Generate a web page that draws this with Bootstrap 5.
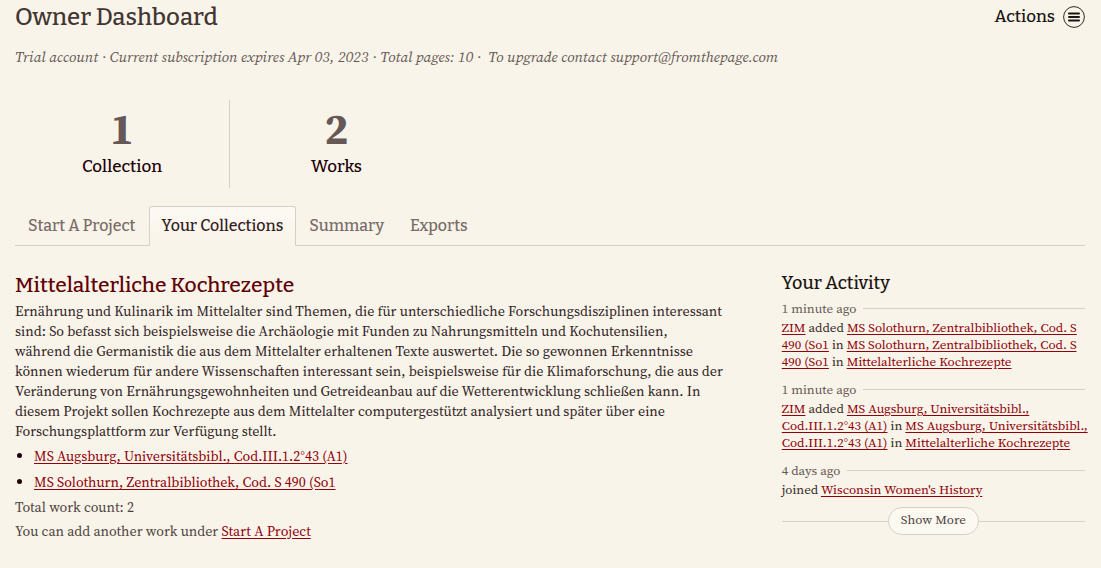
<!DOCTYPE html>
<html lang="en">
<head>
<meta charset="utf-8">
<meta name="viewport" content="width=device-width, initial-scale=1">
<title>Owner Dashboard</title>
<link href="https://cdn.jsdelivr.net/npm/bootstrap@5.3.0/dist/css/bootstrap.min.css" rel="stylesheet">
<style>
  :root { --paper: #f9f4e9; --rule: #d5d1c8; --ink: #362b28; --soft: #665856; --wine: #900009; }
  body { background: var(--paper); color: var(--ink); font: 14px/20px "Source Serif 4", "Noto Serif", "Liberation Serif", serif; }
  a { color: var(--wine); text-underline-offset: 2px; }
  a:hover { color: #5a0006; }
  .page { padding: 1px 16px 24px 15px; }
  .slab, h1, h2, h3 { font-family: Bitter, "DejaVu Serif Condensed", "Noto Serif", serif; font-weight: 500; margin: 0; }
  h1 { font-size: 24px; line-height: 32px; color: #433532; }
  .actions { font-size: 17px; line-height: 32px; color: #1c1413; padding: 0; border: 0; background: none; }
  .trial { font-size: 15px; color: var(--soft); margin: 14px 0 0; }
  .stats { margin-top: 33px; }
  .stat { width: 214px; height: 88px; padding-top: 9px; text-align: center; }
  .stat + .stat { border-left: 1px solid var(--rule); }
  .figure-num { font-size: 44px; line-height: 40px; font-weight: 700; color: var(--soft); }
  .stat .slab { font-size: 17px; line-height: 35px; color: #200008; }
  .nav-tabs { margin-top: 18px; border-color: var(--rule); }
  .nav-tabs .nav-link { font-size: 16px; line-height: 24px; padding: 7px 12px; color: #786b68; border-radius: 3px 3px 0 0; }
  .nav-tabs .nav-link.active { color: #33201e; background: linear-gradient(#fdfaf5, var(--paper)); border-color: var(--rule) var(--rule) var(--paper); }
  .columns { display: grid; grid-template-columns: minmax(0, 12fr) minmax(0, 5fr); column-gap: 39px; margin-top: 25px; }
  h2 { font-size: 21px; line-height: 28px; }
  h2 a { color: #600006; text-decoration: none; }
  .about { margin: 2px 0 0; color: #302325; }
  .works { margin: 2px 0 0; padding-left: 19px; line-height: 26px; }
  .works li::marker { color: #200008; }
  .note { color: #4e4340; line-height: 24px; margin: 0; }
  h3 { font-size: 18px; line-height: 24px; color: #1c1413; }
  .feed { font-size: 13px; line-height: 17px; font-optical-sizing: none; margin: 3px 0 0; }
  .feed li { margin-bottom: 9px; }
  .feed .stamp { color: var(--soft); line-height: 21px; gap: 7px; }
  .ruled::after, .both::before { content: ""; flex: 1; height: 1px; background: var(--rule); }
  .feed p { margin: 0; }
  .more { font-size: 13px; line-height: 18px; padding: 3px 12px 5px; border: 1px solid var(--rule); border-radius: 14px; background: #fcf9f1; color: #4e4340; }
</style>
</head>
<body>
<div class="page container-fluid">
  <header class="d-flex justify-content-between align-items-center">
    <h1>Owner Dashboard</h1>
    <button type="button" class="actions slab d-flex align-items-center gap-2">Actions
      <svg width="22" height="22" viewBox="0 0 22 22" fill="none" stroke="currentColor" aria-hidden="true"><circle cx="11" cy="11" r="10.4" stroke-width=".9"/><path d="M6 7.5h10M6 11h10M6 14.5h10" stroke-width="2" stroke-linecap="round"/></svg>
    </button>
  </header>
  <p class="trial fst-italic">Trial account · Current subscription expires Apr 03, 2023 · Total pages: 10 ·&nbsp; To upgrade contact support@fromthepage.com</p>

  <section class="stats d-flex">
    <div class="stat"><div class="figure-num">1</div><div class="slab">Collection</div></div>
    <div class="stat"><div class="figure-num">2</div><div class="slab">Works</div></div>
  </section>

  <ul class="nav nav-tabs slab">
    <li class="nav-item"><a class="nav-link" href="#start">Start A Project</a></li>
    <li class="nav-item"><a class="nav-link active" aria-current="page" href="#collections">Your Collections</a></li>
    <li class="nav-item"><a class="nav-link" href="#summary">Summary</a></li>
    <li class="nav-item"><a class="nav-link" href="#exports">Exports</a></li>
  </ul>

  <div class="columns">
    <main>
      <h2><a href="#collection">Mittelalterliche Kochrezepte</a></h2>
      <p class="about" lang="de">Ernährung und Kulinarik im Mittelalter sind Themen, die für unterschiedliche Forschungsdisziplinen interessant<br>
        sind: So befasst sich beispielsweise die Archäologie mit Funden zu Nahrungsmitteln und Kochutensilien,<br>
        während die Germanistik die aus dem Mittelalter erhaltenen Texte auswertet. Die so gewonnen Erkenntnisse<br>
        können wiederum für andere Wissenschaften interessant sein, beispielsweise für die Klimaforschung, die aus der<br>
        Veränderung von Ernährungsgewohnheiten und Getreideanbau auf die Wetterentwicklung schließen kann. In<br>
        diesem Projekt sollen Kochrezepte aus dem Mittelalter computergestützt analysiert und später über eine<br>
        Forschungsplattform zur Verfügung stellt.</p>
      <ul class="works">
        <li><a href="#augsburg">MS Augsburg, Universitätsbibl., Cod.III.1.2°43 (A1)</a></li>
        <li><a href="#solothurn">MS Solothurn, Zentralbibliothek, Cod. S 490 (So1</a></li>
      </ul>
      <p class="note">Total work count: 2</p>
      <p class="note">You can add another work under <a href="#start">Start A Project</a></p>
    </main>

    <aside>
      <h3>Your Activity</h3>
      <ul class="feed list-unstyled">
        <li>
          <div class="stamp ruled d-flex align-items-center">1 minute ago</div>
          <p class="text-nowrap"><a href="#zim">ZIM</a> added <a href="#solothurn">MS Solothurn, Zentralbibliothek, Cod. S<br>490 (So1</a> in <a href="#solothurn">MS Solothurn, Zentralbibliothek, Cod. S<br>490 (So1</a> in <a href="#collection">Mittelalterliche Kochrezepte</a></p>
        </li>
        <li>
          <div class="stamp ruled d-flex align-items-center">1 minute ago</div>
          <p class="text-nowrap"><a href="#zim">ZIM</a> added <a href="#augsburg">MS Augsburg, Universitätsbibl.,<br>Cod.III.1.2°43 (A1)</a> in <a href="#augsburg">MS Augsburg, Universitätsbibl.,<br>Cod.III.1.2°43 (A1)</a> in <a href="#collection">Mittelalterliche Kochrezepte</a></p>
        </li>
        <li>
          <div class="stamp ruled d-flex align-items-center">4 days ago</div>
          <p>joined <a href="#wisconsin">Wisconsin Women's History</a></p>
        </li>
      </ul>
      <div class="ruled both d-flex align-items-center mt-2"><button type="button" class="more">Show More</button></div>
    </aside>
  </div>
</div>
<script src="https://cdn.jsdelivr.net/npm/bootstrap@5.3.0/dist/js/bootstrap.bundle.min.js"></script>
</body>
</html>
